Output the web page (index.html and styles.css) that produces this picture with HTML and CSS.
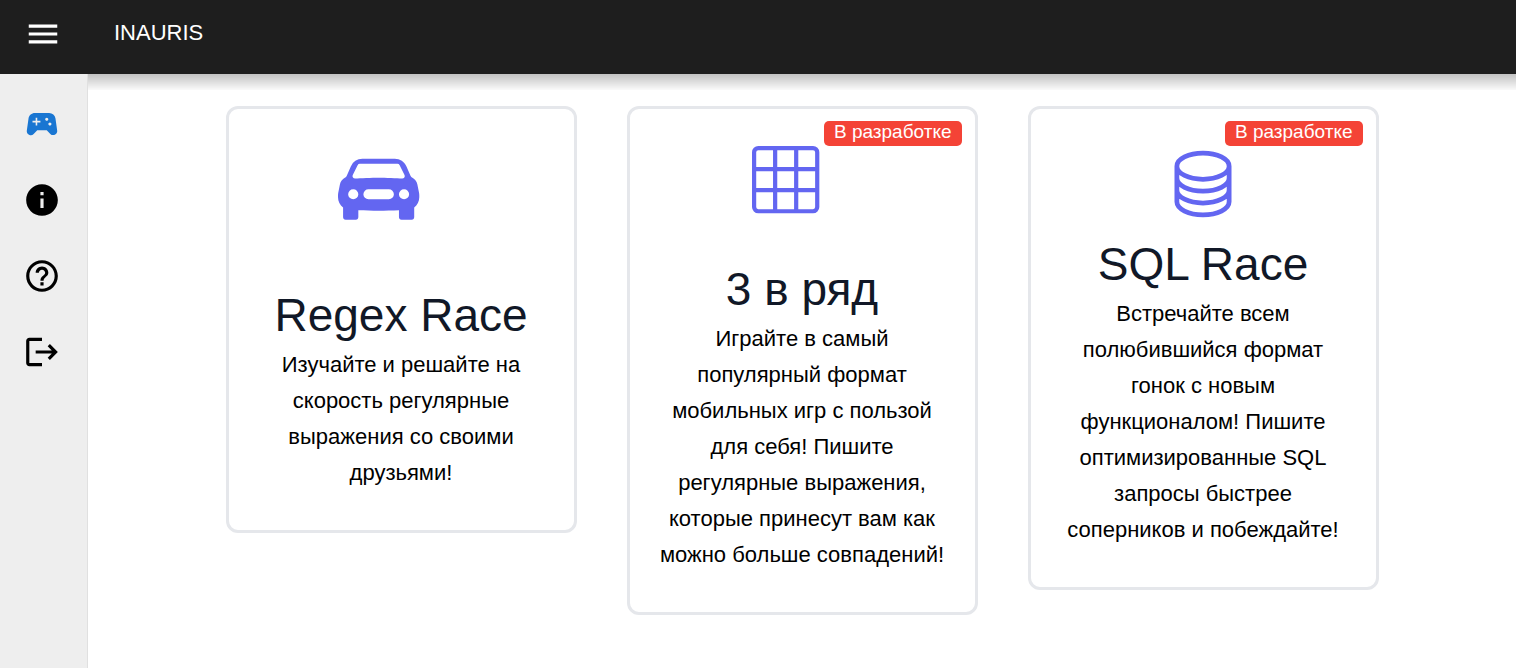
FILE: index.html
```html
<!DOCTYPE html>
<html lang="ru">
<head>
  <meta charset="utf-8">
  <meta name="viewport" content="width=device-width, initial-scale=1">
  <title>INAURIS</title>
  <link rel="stylesheet" href="styles.css">
</head>
<body>
  <header class="topbar">
    <button class="menu-button" type="button" aria-label="Меню">
      <svg class="nav-icon" viewBox="0 0 24 24"><path d="M3 18h18v-2H3v2zm0-5h18v-2H3v2zm0-7v2h18V6H3z"/></svg>
    </button>
    <span class="brand">INAURIS</span>
  </header>
  <div class="layout">
    <nav class="sidebar">
      <a class="nav-link nav-link-active" href="#games" aria-label="Игры">
        <svg class="nav-icon" viewBox="0 0 24 24"><path d="M21.58 16.09l-1.09-7.66A3.996 3.996 0 0 0 16.53 5H7.47C5.48 5 3.79 6.46 3.51 8.43l-1.09 7.66a2.545 2.545 0 0 0 4.32 2.16L9 16h6l2.25 2.25c.48.48 1.13.75 1.8.75 1.56 0 2.75-1.37 2.53-2.91zM11 11H9v2H8v-2H6v-1h2V8h1v2h2v1zm4-1c-.55 0-1-.45-1-1s.45-1 1-1 1 .45 1 1-.45 1-1 1zm2 3c-.55 0-1-.45-1-1s.45-1 1-1 1 .45 1 1-.45 1-1 1z"/></svg>
      </a>
      <a class="nav-link" href="#about" aria-label="О проекте">
        <svg class="nav-icon" viewBox="0 0 24 24"><path d="M12 2C6.48 2 2 6.48 2 12s4.48 10 10 10 10-4.48 10-10S17.52 2 12 2zm1 15h-2v-6h2v6zm0-8h-2V7h2v2z"/></svg>
      </a>
      <a class="nav-link" href="#help" aria-label="Помощь">
        <svg class="nav-icon" viewBox="0 0 24 24"><path d="M11 18h2v-2h-2v2zm1-16C6.48 2 2 6.48 2 12s4.48 10 10 10 10-4.48 10-10S17.52 2 12 2zm0 18c-4.41 0-8-3.59-8-8s3.59-8 8-8 8 3.59 8 8-3.59 8-8 8zm0-14c-2.21 0-4 1.79-4 4h2c0-1.1.9-2 2-2s2 .9 2 2c0 2-3 1.75-3 5h2c0-2.25 3-2.5 3-5 0-2.21-1.79-4-4-4z"/></svg>
      </a>
      <a class="nav-link" href="#logout" aria-label="Выйти">
        <svg class="nav-icon" viewBox="0 0 24 24"><path d="m17 7-1.41 1.41L18.17 11H8v2h10.17l-2.58 2.58L17 17l5-5zM4 5h8V3H4c-1.1 0-2 .9-2 2v14c0 1.1.9 2 2 2h8v-2H4z"/></svg>
      </a>
    </nav>
    <main class="content">
      <div class="cards">
        <article class="card">
          <svg class="card-icon card-icon-large" viewBox="0 -0.5 25 25"><path fill-rule="evenodd" d="M2.52 3.515A2.5 2.5 0 0 1 4.82 2h6.362c1 0 1.904.596 2.298 1.515l.792 1.848c.075.175.21.319.38.404.5.25.855.715.965 1.262l.335 1.679c.033.161.049.325.049.49v.413c0 .814-.39 1.543-1 1.997V13.5a.5.5 0 0 1-.5.5h-2a.5.5 0 0 1-.5-.5v-1.338c-1.292.048-2.745.088-4 .088s-2.708-.04-4-.088V13.5a.5.5 0 0 1-.5.5h-2a.5.5 0 0 1-.5-.5v-1.892c-.61-.454-1-1.183-1-1.997v-.413a2.5 2.5 0 0 1 .049-.49l.335-1.68c.11-.546.465-1.012.964-1.261a.807.807 0 0 0 .381-.404l.792-1.848ZM3 10a1 1 0 1 0 0-2 1 1 0 0 0 0 2Zm10 0a1 1 0 1 0 0-2 1 1 0 0 0 0 2ZM6 8a1 1 0 0 0 0 2h4a1 1 0 1 0 0-2H6ZM2.906 5.189a.51.51 0 0 0 .497.731c.91-.073 3.35-.17 4.597-.17 1.247 0 3.688.097 4.597.17a.51.51 0 0 0 .497-.731l-.956-1.913A.5.5 0 0 0 11.691 3H4.309a.5.5 0 0 0-.447.276L2.906 5.19Z"/></svg>
          <h2 class="card-title">Regex Race</h2>
          <p class="card-text">Изучайте и решайте на скорость регулярные выражения со своими друзьями!</p>
        </article>
        <article class="card">
          <span class="badge">В разработке</span>
          <svg class="card-icon card-icon-medium" viewBox="0 0 24 24"><path d="M0 1.5A1.5 1.5 0 0 1 1.5 0h13A1.5 1.5 0 0 1 16 1.5v13a1.5 1.5 0 0 1-1.5 1.5h-13A1.5 1.5 0 0 1 0 14.5v-13zM1.5 1a.5.5 0 0 0-.5.5V5h4V1H1.5zM5 6H1v4h4V6zm1 4h4V6H6v4zm-1 1H1v3.5a.5.5 0 0 0 .5.5H5v-4zm1 0v4h4v-4H6zm5 0v4h3.5a.5.5 0 0 0 .5-.5V11h-4zm0-1h4V6h-4v4zm0-5h4V1.5a.5.5 0 0 0-.5-.5H11v4zm-1 0V1H6v4h4z"/></svg>
          <h2 class="card-title">3 в ряд</h2>
          <p class="card-text">Играйте в самый популярный формат мобильных игр с пользой для себя! Пишите регулярные выражения, которые принесут вам как можно больше совпадений!</p>
        </article>
        <article class="card">
          <span class="badge">В разработке</span>
          <svg class="card-icon card-icon-small card-icon-outline" viewBox="0 0 24 24"><path d="M20.25 6.375c0 2.278-3.694 4.125-8.25 4.125S3.75 8.653 3.75 6.375m16.5 0c0-2.278-3.694-4.125-8.25-4.125S3.75 4.097 3.75 6.375m16.5 0v11.25c0 2.278-3.694 4.125-8.25 4.125s-8.25-1.847-8.25-4.125V6.375m16.5 0v3.75m-16.5-3.75v3.75m16.5 0v3.75C20.25 16.153 16.556 18 12 18s-8.25-1.847-8.25-4.125v-3.75m16.5 0c0 2.278-3.694 4.125-8.25 4.125s-8.25-1.847-8.25-4.125"/></svg>
          <h2 class="card-title">SQL Race</h2>
          <p class="card-text">Встречайте всем полюбившийся формат гонок с новым функционалом! Пишите оптимизированные SQL запросы быстрее соперников и побеждайте!</p>
        </article>
      </div>
    </main>
  </div>
</body>
</html>
```
FILE: styles.css
```css
* {
  box-sizing: border-box;
}

body {
  margin: 0;
  min-height: 100vh;
  display: flex;
  flex-direction: column;
  background: #fff;
  color: #000;
  font-family: "Liberation Sans", Arial, sans-serif;
  font-size: 22px;
}

.topbar {
  display: flex;
  align-items: flex-start;
  gap: 44px;
  padding: 8px 16px 14px;
  background: #1e1e1e;
  color: #fff;
}

.menu-button {
  display: flex;
  padding: 7px 8px;
  border: 0;
  background: none;
  color: inherit;
  cursor: pointer;
}

.nav-icon {
  display: block;
  width: 38px;
  height: 38px;
  fill: currentColor;
}

.brand {
  line-height: 50px;
}

.layout {
  flex: 1;
  display: flex;
}

.sidebar {
  flex: none;
  width: 88px;
  padding: 12px 0;
  background: #eee;
  border-right: 1px solid #e0e0e0;
}

.nav-link {
  display: flex;
  padding: 19px 23px;
  color: #000;
}

.nav-link-active {
  color: #1976d2;
}

.content {
  flex: 1;
  padding: 32px;
  background: linear-gradient(rgba(0, 0, 0, 0.24), rgba(0, 0, 0, 0.02) 16px, transparent 16px);
}

.cards {
  display: grid;
  grid-template-columns: repeat(3, 1fr);
  align-items: start;
  gap: 50px;
  max-width: 1153px;
  margin: 0 auto;
}

.card {
  position: relative;
  padding: 37px 26px 39px;
  border: 3px solid #e5e7eb;
  border-radius: 12px;
  background: #fff;
  text-align: center;
}

.badge {
  position: absolute;
  top: 12px;
  right: 13px;
  padding: 0 10px 4px;
  border-radius: 5px;
  background: #f44336;
  color: #fff;
  font-size: 19px;
  line-height: 21px;
}

.card-icon {
  display: block;
  margin: 0 auto;
  fill: #6366f1;
}

.card-icon-large {
  width: 127px;
  height: 127px;
}

.card-icon-medium {
  width: 101px;
  height: 101px;
}

.card-icon-small {
  width: 76px;
  height: 76px;
}

.card-icon-outline {
  fill: none;
  stroke: #6366f1;
  stroke-width: 1.5;
  stroke-linecap: round;
  stroke-linejoin: round;
}

.card-title {
  margin: 10px 0 0;
  color: #111827;
  font-size: 46px;
  font-weight: 400;
  line-height: 64px;
}

.card-text {
  margin: 0;
  line-height: 36px;
}
```
